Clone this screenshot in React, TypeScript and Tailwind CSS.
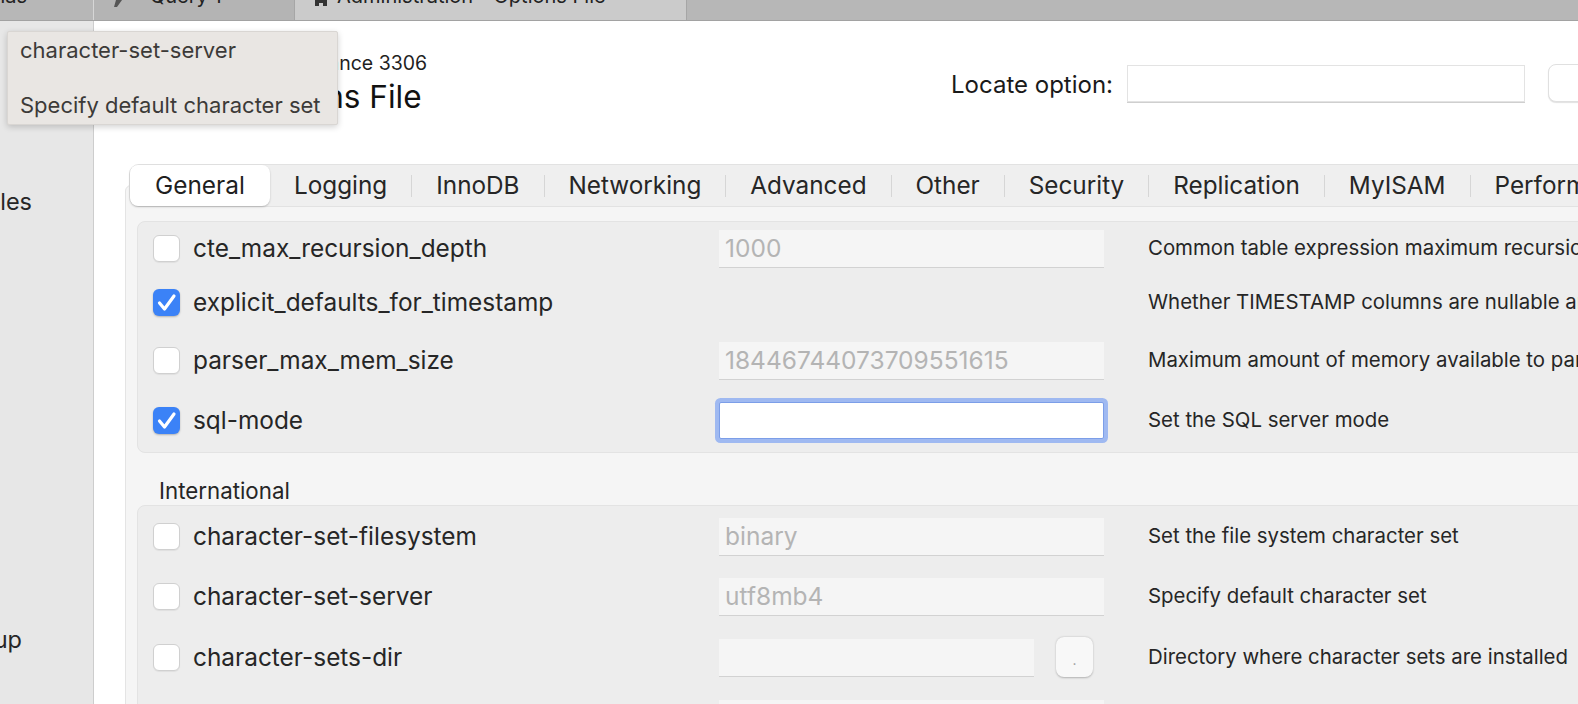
import React from "react";

type Row = {
  name: string;
  checked?: boolean;
  value?: string;
  kind?: "input" | "none" | "focus" | "dir";
  desc: string;
  h: string;
};

function Check({ checked }: { checked?: boolean }) {
  if (checked) {
    return (
      <div className="w-[27px] h-[27px] shrink-0 rounded-[6px] bg-[#3b82f7] flex items-center justify-center shadow-[0_1px_2px_rgba(0,0,0,0.25)]">
        <svg width="27" height="27" viewBox="0 0 27 27">
          <path d="M6.5 14 L11.5 20 L21 7" stroke="white" strokeWidth="3.2" fill="none" strokeLinecap="round" strokeLinejoin="round" />
        </svg>
      </div>
    );
  }
  return <div className="w-[27px] h-[27px] shrink-0 rounded-[6px] bg-white border border-[#d0d0d0] shadow-[0_1px_1px_rgba(0,0,0,0.06)]" />;
}

function OptionRow({ r }: { r: Row }) {
  return (
    <div className={`flex items-center pl-[15px] ${r.h}`}>
      <Check checked={r.checked} />
      <div className="ml-[13px] w-[526px] shrink-0 text-[24.4px] text-[#262626] whitespace-nowrap">{r.name}</div>
      <div className="w-[385px] shrink-0 flex items-center">
        {r.kind === "input" && (
          <div className="w-[385px] h-[37px] bg-[#f5f5f5] shadow-[0_1px_0_#d2d2d2] flex items-center px-[6px] text-[24.5px] text-[#b4b4b4] whitespace-nowrap overflow-hidden">
            {r.value}
          </div>
        )}
        {r.kind === "focus" && (
          <div className="w-[385px] h-[37px] bg-white border border-[#7c9ee8] rounded-[2px] shadow-[0_0_0_4px_#9fb9f1]" />
        )}
        {r.kind === "dir" && (
          <div className="flex items-center">
            <div className="w-[315px] h-[37px] bg-[#f5f5f5] shadow-[0_1px_0_#d2d2d2]" />
            <div className="ml-[22px] w-[37px] h-[40px] rounded-[8px] bg-[#f8f8f8] shadow-[0_0.5px_2px_rgba(0,0,0,0.25)] flex items-end justify-center pb-[10px] text-[14px] text-[#9a9a9a] leading-none">
              .
            </div>
          </div>
        )}
      </div>
      <div className="ml-[44px] text-[20.4px] text-[#262626] whitespace-nowrap">{r.desc}</div>
    </div>
  );
}

const group1: Row[] = [
  { name: "cte_max_recursion_depth", value: "1000", kind: "input", desc: "Common table expression maximum recursion depth", h: "h-[52px]" },
  { name: "explicit_defaults_for_timestamp", checked: true, kind: "none", desc: "Whether TIMESTAMP columns are nullable and have default values", h: "h-[57px]" },
  { name: "parser_max_mem_size", value: "18446744073709551615", kind: "input", desc: "Maximum amount of memory available to parser", h: "h-[58px]" },
  { name: "sql-mode", checked: true, kind: "focus", desc: "Set the SQL server mode", h: "h-[62px]" },
];

const group2: Row[] = [
  { name: "character-set-filesystem", value: "binary", kind: "input", desc: "Set the file system character set", h: "h-[60px]" },
  { name: "character-set-server", value: "utf8mb4", kind: "input", desc: "Specify default character set", h: "h-[60px]" },
  { name: "character-sets-dir", kind: "dir", desc: "Directory where character sets are installed", h: "h-[62px]" },
  { name: "collation-server", value: "utf8mb4_0900_ai_ci", kind: "input", desc: "Set the default collation", h: "h-[61px]" },
];

const tabs = ["Logging", "InnoDB", "Networking", "Advanced", "Other", "Security", "Replication", "MyISAM", "Performance Schema"];

export default function App() {
  return (
    <div className="relative w-[1578px] h-[704px] overflow-hidden bg-white font-['Inter',sans-serif] text-[#262626]">
      {/* top tab strip */}
      <div className="h-[21px] flex bg-[#b7b7b7] border-b border-[#a2a2a2] overflow-hidden">
        <div className="w-[94px] shrink-0 border-r border-[#d6d6d6] flex justify-end pr-[66px] whitespace-nowrap overflow-hidden">
          <div className="-mt-[14px] text-[20px] leading-[20px] text-[#222]">Schemas</div>
        </div>
        <div className="w-[201px] shrink-0 bg-[#b4b4b4] border-r border-[#a6a6a6] flex pl-[19px] overflow-hidden">
          <svg width="10" height="8" viewBox="0 0 10 8">
            <path d="M3 0 L9 0 L4 7 L1 7 Z" fill="#555" />
          </svg>
          <div className="ml-[27px] -mt-[14px] text-[20px] leading-[20px] text-[#222]">Query 1</div>
        </div>
        <div className="w-[392px] shrink-0 bg-[#cbcbcb] border-r border-[#a6a6a6] flex pl-[18px] overflow-hidden">
          <svg width="16" height="8" viewBox="0 0 16 8">
            <path d="M2 0 L14 0 L14 6 L10 6 L10 3 L6 3 L6 6 L2 6 Z" fill="#333" />
          </svg>
          <div className="ml-[8px] -mt-[14px] text-[20px] leading-[20px] text-[#222] whitespace-nowrap">Administration - Options File</div>
        </div>
        <div className="flex-1" />
      </div>

      <div className="flex h-[683px]">
        {/* sidebar */}
        <div className="w-[94px] shrink-0 bg-[#e7e7e7] border-r border-[#cdcdcd] overflow-hidden">
          <div className="mt-[167px] h-[28px] flex items-center justify-end pr-[61px] whitespace-nowrap text-[23.5px] text-[#262626]">
            Status and System Variables
          </div>
          <div className="mt-[410px] h-[28px] flex items-center justify-end pr-[71px] whitespace-nowrap text-[23.5px] text-[#262626]">
            Performance Schema Setup
          </div>
        </div>

        {/* main */}
        <div className="flex-1 overflow-hidden">
          {/* header */}
          <div className="flex h-[143px]">
            <div className="w-[806px] shrink-0 pl-[146px] pt-[30px]">
              <div className="text-[19.5px] leading-[24px] text-[#1f1f1f] whitespace-nowrap">Local instance 3306</div>
              <div className="mt-[3px] ml-[5px] text-[31.5px] leading-[38px] text-[#111] whitespace-nowrap">Options File</div>
            </div>
            <div className="flex items-center h-[38px] mt-[43px]">
              <div className="w-[213px] pt-[3px] text-right text-[24px] text-[#1a1a1a] whitespace-nowrap">Locate option:</div>
              <div className="ml-[14px] w-[398px] h-[37px] shrink-0 bg-white border border-[#e3e3e3] shadow-[0_1px_0_#cfcfcf]" />
              <div className="ml-[23px] w-[110px] h-[38px] shrink-0 rounded-[8px] bg-white border border-[#e0e0e0] shadow-[0_1px_1px_rgba(0,0,0,0.12)]" />
            </div>
          </div>

          {/* tab view */}
          <div className="ml-[31px] w-[1560px]">
            <div className="relative z-10 ml-[4px] h-[43px] flex items-center bg-[#efefef] border border-[#e2e2e2] rounded-l-[10px]">
              <div className="w-[140px] h-[41px] shrink-0 rounded-[8px] bg-white shadow-[0_1px_2px_rgba(0,0,0,0.22)] flex items-center pl-[25px] text-[24.4px] text-[#1f1f1f]">
                General
              </div>
              {tabs.map((t, i) => (
                <React.Fragment key={t}>
                  {i > 0 && <div className="w-px h-[22px] bg-[#d6d6d6] shrink-0" />}
                  <div className="px-[24px] text-[24.3px] text-[#262626] whitespace-nowrap">{t}</div>
                </React.Fragment>
              ))}
            </div>
            <div className="-mt-[22px] pt-[35px] bg-[#f5f5f5] border border-[#e4e4e4] rounded-[6px] pl-[11px] h-[560px]">
              <div className="bg-[#ededed] border border-[#e3e3e3] rounded-[8px] pb-[1px]">
                {group1.map((r) => (
                  <OptionRow key={r.name} r={r} />
                ))}
              </div>
              <div className="mt-[25px] ml-[22px] h-[26px] leading-[26px] text-[22.3px] text-[#262626]">International</div>
              <div className="mt-[1px] bg-[#ededed] border border-[#e3e3e3] rounded-[8px]">
                {group2.map((r) => (
                  <OptionRow key={r.name} r={r} />
                ))}
              </div>
            </div>
          </div>
        </div>
      </div>

      {/* tooltip */}
      <div className="absolute left-[7px] top-[31px] w-[331px] h-[94px] bg-[#e9e6e3] border border-[#d9d6d3] rounded-[2px] shadow-[0_2px_6px_rgba(0,0,0,0.18)] pl-[12px] text-[22px] text-[#3c3a38]">
        <div className="mt-[5px] leading-[26px]">character-set-server</div>
        <div className="mt-[29px] leading-[26px]">Specify default character set</div>
      </div>
    </div>
  );
}
